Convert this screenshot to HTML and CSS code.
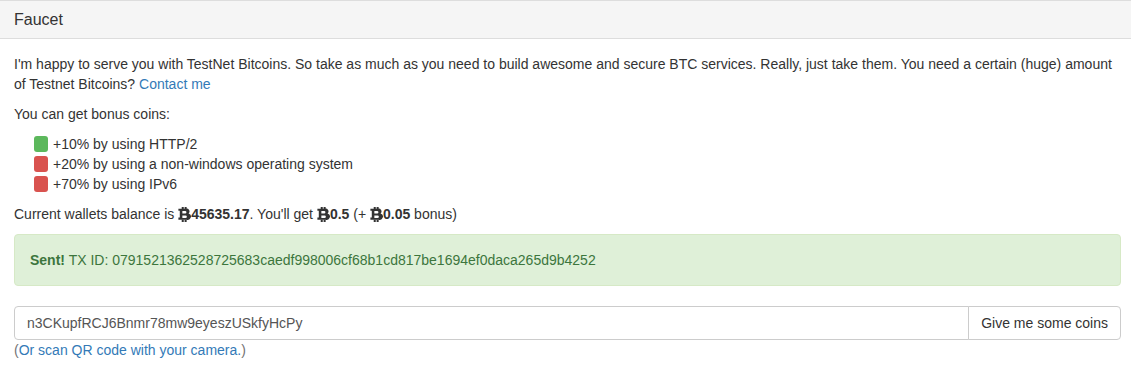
FILE: index.html
```html
<!DOCTYPE html>
<html lang="en">
<head>
    <meta charset="UTF-8">
    <meta name="viewport" content="width=device-width, initial-scale=1.0">
    <title>Faucet</title>
    <link rel="stylesheet" href="styles.css">
</head>
<body>
    <div class="panel">
        <div class="panel-heading">
            <h3 class="panel-title">Faucet</h3>
        </div>
        <div class="panel-body">
            <p>I'm happy to serve you with TestNet Bitcoins. So take as much as you need to build awesome and secure BTC services. Really, just take them. You need a certain (huge) amount of Testnet Bitcoins? <a href="#">Contact me</a></p>

            <p>You can get bonus coins:</p>
            <ul class="bonus-list">
                <li><span class="label ok"></span>+10% by using HTTP/2</li>
                <li><span class="label no"></span>+20% by using a non-windows operating system</li>
                <li><span class="label no"></span>+70% by using IPv6</li>
            </ul>

            <p>Current wallets balance is <b><svg class="btc" viewBox="0 0 12 14"><rect x="3.4" y="0" width="1.9" height="2.2" /><rect x="6.1" y="0" width="1.9" height="2.2" /><rect x="3.4" y="11.8" width="1.9" height="2.2" /><rect x="6.1" y="11.8" width="1.9" height="2.2" /><path d="M0.3 1.6h6.9a2.8 2.6 0 0 1 2.6 4.4a3 2.9 0 0 1 -1.9 5.8h-7.6v-1.9h1.3v-6.4h-1.3z M4 3.7v2.4h2.6a1.2 1.2 0 0 0 0 -2.4z M4 7.9v2.4h3a1.2 1.2 0 0 0 0 -2.4z" fill-rule="evenodd" /></svg>45635.17</b>. You'll get <b><svg class="btc" viewBox="0 0 12 14"><rect x="3.4" y="0" width="1.9" height="2.2" /><rect x="6.1" y="0" width="1.9" height="2.2" /><rect x="3.4" y="11.8" width="1.9" height="2.2" /><rect x="6.1" y="11.8" width="1.9" height="2.2" /><path d="M0.3 1.6h6.9a2.8 2.6 0 0 1 2.6 4.4a3 2.9 0 0 1 -1.9 5.8h-7.6v-1.9h1.3v-6.4h-1.3z M4 3.7v2.4h2.6a1.2 1.2 0 0 0 0 -2.4z M4 7.9v2.4h3a1.2 1.2 0 0 0 0 -2.4z" fill-rule="evenodd" /></svg>0.5</b> (+ <b><svg class="btc" viewBox="0 0 12 14"><rect x="3.4" y="0" width="1.9" height="2.2" /><rect x="6.1" y="0" width="1.9" height="2.2" /><rect x="3.4" y="11.8" width="1.9" height="2.2" /><rect x="6.1" y="11.8" width="1.9" height="2.2" /><path d="M0.3 1.6h6.9a2.8 2.6 0 0 1 2.6 4.4a3 2.9 0 0 1 -1.9 5.8h-7.6v-1.9h1.3v-6.4h-1.3z M4 3.7v2.4h2.6a1.2 1.2 0 0 0 0 -2.4z M4 7.9v2.4h3a1.2 1.2 0 0 0 0 -2.4z" fill-rule="evenodd" /></svg>0.05</b> bonus)</p>

            <div class="alert">
                <strong>Sent!</strong> TX ID: 0791521362528725683caedf998006cf68b1cd817be1694ef0daca265d9b4252
            </div>

            <form class="input-group">
                <input type="text" class="form-control" value="n3CKupfRCJ6Bnmr78mw9eyeszUSkfyHcPy">
                <button type="button" class="btn">Give me some coins</button>
            </form>
            <div class="help">(<a href="#">Or scan QR code with your camera.</a>)</div>
        </div>
    </div>
</body>
</html>
```

FILE: styles.css
```css
body {
    margin: 0;
    font-family: "Liberation Sans", Arial, sans-serif;
    font-size: 14px;
    line-height: 20px;
    color: #333;
    background: #fff;
}
a {
    color: #337ab7;
    text-decoration: none;
}
p {
    margin: 0 0 10px;
}
.panel {
    margin: 0 -6px 0 -2px;
    border: 1px solid #ddd;
    background: #fff;
}
.panel-heading {
    padding: 10px 15px;
    background-color: #f5f5f5;
    border-bottom: 1px solid #ddd;
}
.panel-title {
    margin: 0;
    font-size: 16px;
    font-weight: normal;
    line-height: 17px;
}
.panel-body {
    padding: 15px;
}
.bonus-list {
    list-style: none;
    margin: 0 0 10px;
    padding-left: 20px;
}
.bonus-list li {
    display: flex;
    align-items: center;
}
.label {
    display: inline-block;
    width: 14px;
    height: 16px;
    margin-right: 5px;
    border-radius: 3px;
}
.label.ok {
    background-color: #5cb85c;
}
.label.no {
    background-color: #d9534f;
}
.btc {
    width: 13px;
    height: 15px;
    vertical-align: -3px;
    fill: #333;
}
.alert {
    padding: 15px;
    margin-bottom: 20px;
    border: 1px solid #d6e9c6;
    border-radius: 4px;
    background-color: #dff0d8;
    color: #3c763d;
}
.input-group {
    display: flex;
    margin: 0;
}
.form-control {
    flex: 1;
    height: 34px;
    box-sizing: border-box;
    padding: 6px 12px;
    border: 1px solid #ccc;
    border-radius: 4px 0 0 4px;
    font-family: inherit;
    font-size: 14px;
    color: #555;
    outline: none;
}
.btn {
    height: 34px;
    margin-left: -1px;
    padding: 6px 12px;
    border: 1px solid #ccc;
    border-radius: 0 4px 4px 0;
    background-color: #fff;
    font-family: inherit;
    font-size: 14px;
    color: #333;
    cursor: pointer;
}
.help {
    color: #737373;
}
```
